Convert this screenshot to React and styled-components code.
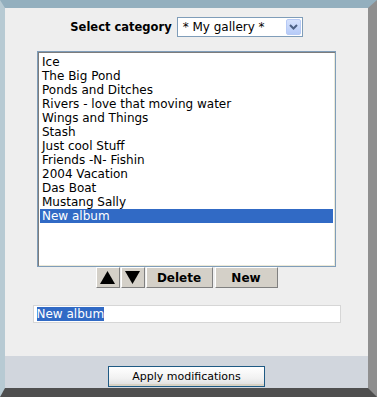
import React, { useState } from 'react'
import styled, { createGlobalStyle } from 'styled-components'

const GlobalStyle = createGlobalStyle`
    html, body {
        margin: 0;
        padding: 0;
        background: #eeeeee;
    }
    body {
        font-family: "DejaVu Sans", Tahoma, sans-serif;
        font-size: 12px;
        color: #000;
    }
`

const albums = [
    'Ice',
    'The Big Pond',
    'Ponds and Ditches',
    'Rivers - love that moving water',
    'Wings and Things',
    'Stash',
    'Just cool Stuff',
    'Friends -N- Fishin',
    '2004 Vacation',
    'Das Boat',
    'Mustang Sally',
    'New album',
]

function App() {
    const [selected, setSelected] = useState(11)

    return (
        <>
            <GlobalStyle />
            <Frame>
                <Body>
                    <CategoryRow>
                        <Label>Select category</Label>
                        <Select>
                            <span>* My gallery *</span>
                            <DropButton>
                                <svg width="9" height="6" viewBox="0 0 9 6">
                                    <path d="M1 1 L4.5 4.5 L8 1" fill="none" stroke="#4d6185" strokeWidth="2" />
                                </svg>
                            </DropButton>
                        </Select>
                    </CategoryRow>

                    <ListBox>
                        {albums.map((name, i) => (
                            <Item key={name} $active={i === selected} onClick={() => setSelected(i)}>
                                {name}
                            </Item>
                        ))}
                    </ListBox>

                    <Controls>
                        <ArrowButton>
                            <svg width="15" height="13" viewBox="0 0 15 13">
                                <path d="M7.5 0 L15 13 L0 13 Z" fill="#000" />
                            </svg>
                        </ArrowButton>
                        <ArrowButton>
                            <svg width="15" height="13" viewBox="0 0 15 13">
                                <path d="M0 0 L15 0 L7.5 13 Z" fill="#000" />
                            </svg>
                        </ArrowButton>
                        <TextButton $width={67}>Delete</TextButton>
                        <TextButton $width={63}>New</TextButton>
                    </Controls>

                    <NameField>
                        <Highlight>{albums[selected]}</Highlight>
                    </NameField>
                </Body>
                <Footer>
                    <ApplyButton>Apply modifications</ApplyButton>
                </Footer>
            </Frame>
        </>
    )
}

export default App

const Frame = styled.div`
    box-sizing: border-box;
    width: 377px;
    height: 397px;
    display: flex;
    flex-direction: column;
    border-style: solid;
    border-width: 8px 9px 9px 5px;
    border-color: #93afbe #8f8f8f #4f4f4f #b7cad3;
    box-shadow: inset 0 3px 0 #b9ccd6, inset 2px 0 0 #d3dfe5, inset -3px 0 0 #c2c2c2, inset 0 -3px 0 #8b8b8b;
`
const Body = styled.div`
    flex: 1;
    background: #eeeeee;
    display: flex;
    flex-direction: column;
    align-items: center;
    padding-top: 9px;
`
const CategoryRow = styled.div`
    display: flex;
    align-items: center;
    gap: 5px;
    height: 20px;
`
const Label = styled.span`
    font-weight: bold;
    font-size: 11.5px;
`
const Select = styled.div`
    box-sizing: border-box;
    width: 126px;
    height: 20px;
    border: 1px solid #7f9db9;
    background: #fff;
    display: flex;
    align-items: center;
    justify-content: space-between;
    padding: 0 1px 0 5px;
    font-size: 12px;
`
const DropButton = styled.div`
    box-sizing: border-box;
    width: 15px;
    height: 16px;
    border: 1px solid #b7caf5;
    border-radius: 2px;
    background: linear-gradient(#d6e2fd, #b6cbf8);
    display: flex;
    align-items: center;
    justify-content: center;
`
const ListBox = styled.div`
    box-sizing: border-box;
    margin-top: 14px;
    width: 299px;
    height: 216px;
    border: 1px solid #7f9db9;
    background: #fff;
    box-shadow: inset 1px 1px 0 #7c7c7c, inset -1px -1px 0 #ece9d8;
    padding: 3px 2px 0 2px;
    overflow: hidden;
`
const Item = styled.div`
    height: 14px;
    line-height: 14px;
    padding-left: 2px;
    white-space: nowrap;
    cursor: default;
    background: ${p => (p.$active ? '#316ac5' : 'transparent')};
    color: ${p => (p.$active ? '#fff' : '#000')};
`
const Controls = styled.div`
    display: flex;
    gap: 2px;
`
const RaisedButton = styled.button`
    box-sizing: border-box;
    height: 21px;
    margin: 0;
    padding: 0;
    background: #d4d0c8;
    border: 1px solid;
    border-color: #ffffff #808080 #808080 #ffffff;
    display: flex;
    align-items: center;
    justify-content: center;
    cursor: pointer;
    font-family: "DejaVu Sans", Tahoma, sans-serif;
`
const ArrowButton = styled(RaisedButton)`
    width: 24px;
    margin-right: -1px;
`
const TextButton = styled(RaisedButton)`
    width: ${p => p.$width}px;
    font-size: 12px;
    font-weight: bold;
    color: #000;
`
const NameField = styled.div`
    box-sizing: border-box;
    margin-top: 17px;
    width: 308px;
    height: 18px;
    border: 1px solid #d6d6d6;
    background: #fff;
    padding: 1px 3px;
    display: flex;
    align-items: center;
`
const Highlight = styled.span`
    background: #316ac5;
    color: #fff;
    line-height: 14px;
    font-size: 12px;
`
const Footer = styled.div`
    height: 32px;
    background: #d1d6dd;
    display: flex;
    justify-content: center;
    padding-top: 10px;
    box-sizing: border-box;
`
const ApplyButton = styled.button`
    box-sizing: border-box;
    width: 157px;
    height: 21px;
    margin: 0;
    border: 1px solid #1f5a84;
    background: linear-gradient(#ffffff, #f1f1f1 60%, #dcdcdc);
    box-shadow: inset 0 -2px 0 #d8d2c4;
    font-family: "DejaVu Sans", Tahoma, sans-serif;
    font-size: 11px;
    color: #000;
    padding: 0;
    cursor: pointer;
`
